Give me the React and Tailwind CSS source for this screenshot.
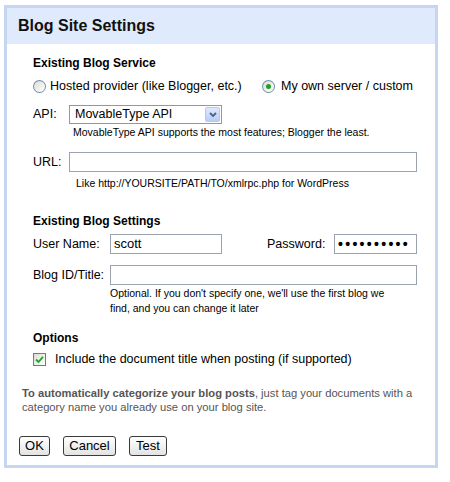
import React from 'react';

function Radio({ checked }) {
  return (
    <span className="relative flex h-[13px] w-[13px] shrink-0 items-center justify-center rounded-full border border-[#1c5180]/60 bg-gradient-to-br from-[#dcdcd7] to-white">
      {checked && <span className="h-[5px] w-[5px] rounded-full bg-[#21a121]" />}
    </span>
  );
}

function Checkbox() {
  return (
    <span className="flex h-[13px] w-[13px] shrink-0 items-center justify-center border border-[#1c5180]/70 bg-gradient-to-br from-[#dcdcd7] to-white">
      <svg width="9" height="9" viewBox="0 0 9 9">
        <path d="M1 4.5 L3.5 7 L8 1.8" fill="none" stroke="#21a121" strokeWidth="1.8" />
      </svg>
    </span>
  );
}

function Button({ children, width }) {
  return (
    <button className={`flex h-[20px] items-center justify-center rounded-[3px] border border-[#3a3a3a] bg-gradient-to-b from-white to-[#e3e3e3] text-[13px] text-black ${width}`}>
      {children}
    </button>
  );
}

export default function App() {
  return (
    <div className="min-h-screen bg-white pl-[4px] pt-[5px] text-black" style={{ fontFamily: '"Liberation Sans", Arial, sans-serif' }}>
      <div className="flex h-[463px] w-[434px] flex-col border-[3px] border-[#c6d6f1] bg-white">
        <div className="flex h-[36px] items-center bg-[#dfeafc] pl-[11px]">
          <h1 className="text-[16px] font-bold leading-none text-[#111]">Blog Site Settings</h1>
        </div>

        <div className="flex flex-col pl-[26px] text-[12.5px]">
          <div className="mt-[11px] flex h-[16px] items-center text-[12px] font-bold">Existing Blog Service</div>

          <div className="mt-[5px] flex h-[20px] items-center">
            <div className="flex w-[229px] items-center gap-[4px]">
              <Radio />
              <span>Hosted provider (like Blogger, etc.)</span>
            </div>
            <div className="flex items-center gap-[6px]">
              <Radio checked />
              <span>My own server / custom</span>
            </div>
          </div>

          <div className="mt-[9px] flex h-[19px] items-center">
            <span className="w-[36px]">API:</span>
            <div className="flex h-[19px] w-[153px] items-center justify-between border border-[#7f9db9] bg-white pl-[5px] pr-[1px]">
              <span>MovableType API</span>
              <span className="flex h-[15px] w-[15px] items-center justify-center rounded-[2px] border border-[#b4c8f6] bg-gradient-to-b from-[#dfe9fd] to-[#b7cdf9]">
                <svg width="8" height="6" viewBox="0 0 8 6">
                  <path d="M1 1 L4 4 L7 1" fill="none" stroke="#4d6185" strokeWidth="1.8" />
                </svg>
              </span>
            </div>
          </div>
          <div className="mt-[2px] flex h-[14px] items-center pl-[40px] text-[10.5px]">
            MovableType API supports the most features; Blogger the least.
          </div>

          <div className="mt-[12px] flex h-[20px] items-center">
            <span className="w-[36px]">URL:</span>
            <div className="h-[20px] w-[348px] border border-[#9aa3ad] bg-white" />
          </div>
          <div className="mt-[5px] flex h-[14px] items-center pl-[43px] text-[10.5px]">
            Like http://YOURSITE/PATH/TO/xmlrpc.php for WordPress
          </div>

          <div className="mt-[22px] flex h-[16px] items-center text-[12px] font-bold">Existing Blog Settings</div>

          <div className="mt-[5px] flex h-[20px] items-center">
            <span className="w-[77px]">User Name:</span>
            <div className="flex h-[20px] w-[112px] items-center border border-[#9aa3ad] bg-white pl-[3px] text-[13px]">scott</div>
            <span className="ml-[45px] w-[67px]">Password:</span>
            <div className="flex h-[20px] w-[83px] items-center overflow-hidden whitespace-nowrap border border-[#9aa3ad] bg-white pl-[3px] text-[14px] font-bold tracking-[2.3px]">
              ••••••••••
            </div>
          </div>

          <div className="mt-[11px] flex h-[20px] items-center">
            <span className="w-[77px]">Blog ID/Title:</span>
            <div className="h-[20px] w-[307px] border border-[#9aa3ad] bg-white" />
          </div>
          <div className="mt-[1px] pl-[77px] text-[10.5px] leading-[15px]">
            Optional. If you don't specify one, we'll use the first blog we
            <br />
            find, and you can change it later
          </div>

          <div className="mt-[14px] flex h-[16px] items-center text-[12px] font-bold">Options</div>
          <div className="mt-[6px] flex h-[14px] items-center gap-[9px]">
            <Checkbox />
            <span>Include the document title when posting (if supported)</span>
          </div>
        </div>

        <div className="mt-[20px] pl-[15px] text-[11.2px] leading-[14px] text-[#555]">
          <span className="font-bold">To automatically categorize your blog posts</span>, just tag your documents with a
          <br />
          category name you already use on your blog site.
        </div>

        <div className="mt-[22px] flex gap-[13px] pl-[12px]">
          <Button width="w-[31px]">OK</Button>
          <Button width="w-[53px]">Cancel</Button>
          <Button width="w-[38px]">Test</Button>
        </div>
      </div>
    </div>
  );
}
